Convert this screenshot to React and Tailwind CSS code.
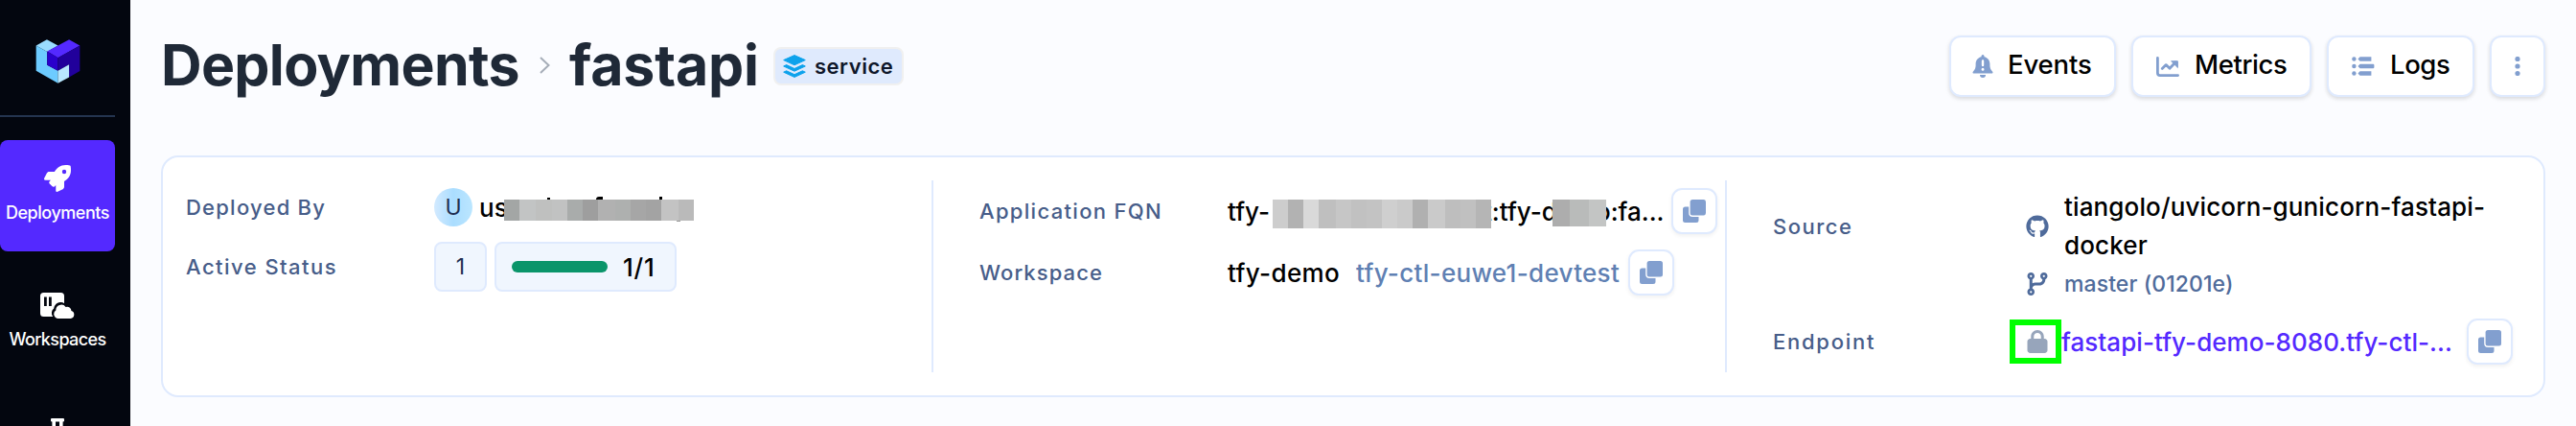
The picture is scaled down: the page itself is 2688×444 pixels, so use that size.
import React from "react";
import { FaRocket, FaGithub } from "react-icons/fa";
import { FaCodeBranch, FaLock } from "react-icons/fa6";

function Logo() {
  return (
    <svg className="h-[46px] w-[47px]" viewBox="0 0 140 139">
      <polygon points="1,20 35,1 70,20 36,39" fill="#9adcff" />
      <polygon points="1,20 36,39 36,81 70,99 70,138 1,99" fill="#6dcbff" />
      <polygon points="36,38 105,1 139,20 70,58" fill="#5429ff" />
      <polygon points="36,38 70,58 70,99 36,81" fill="#2a00cc" />
      <polygon points="70,58 139,20 139,100 105,119 105,79 70,99" fill="#21009b" />
      <polygon points="70,99 105,79 105,119 70,138" fill="#b8e7ff" />
    </svg>
  );
}

function WorkspaceIcon() {
  return (
    <svg className="h-[27px] w-9" viewBox="0 0 36 27" fill="#fff">
      <path
        fillRule="evenodd"
        d="M3.5 0H21.5A3.5 3.5 0 0 1 25 3.5V11.2A7 7 0 0 0 14.2 16.5A6 6 0 0 0 13.2 25H3.5A3.5 3.5 0 0 1 0 21.5V3.5A3.5 3.5 0 0 1 3.5 0ZM4 4.5V14H6.8V4.5ZM9 4.5V14H11.8V4.5Z"
      />
      <path d="M19 27A4.6 4.6 0 0 1 16.3 18.6A5.7 5.7 0 0 1 26.6 15A4.2 4.2 0 0 1 32.4 19A4.1 4.1 0 0 1 31.7 27Z" />
    </svg>
  );
}

function TubeIcon() {
  return (
    <svg className="h-6 w-[14px] shrink-0" viewBox="0 0 14 24" fill="#fff">
      <path fillRule="evenodd" d="M1 0H13A1 1 0 0 1 14 1V2.5A1 1 0 0 1 13 3.5H12.6V18A5.6 5.6 0 0 1 1.4 18V3.5H1A1 1 0 0 1 0 2.5V1A1 1 0 0 1 1 0ZM5 3.5V9H9V3.5Z" />
    </svg>
  );
}

function LayersIcon() {
  return (
    <svg className="size-6" viewBox="0 0 24 24" fill="#0da2ec" stroke="#0da2ec" strokeWidth="1" strokeLinejoin="round">
      <path d="M12 .6L23.3 5.6L12 10.8L.7 5.6Z" />
      <path d="M.7 12L3.6 10.6L12 14.5L20.4 10.6L23.3 12L12 17.2Z" />
      <path d="M.7 18.2L3.6 16.8L12 20.7L20.4 16.8L23.3 18.2L12 23.4Z" />
    </svg>
  );
}

function BellIcon() {
  return (
    <svg className="h-6 w-[22px]" viewBox="0 0 22 24" fill="#829fcf">
      <path
        fillRule="evenodd"
        d="M11 0A1.5 1.5 0 0 0 9.5 1.5V2.3C6 3 3.6 6 3.6 9.6V11.2C3.6 13.4 2.8 15.5 1.4 17.1L.8 17.8C.2 18.6 .6 19.6 1.7 19.6H20.3C21.4 19.6 21.8 18.6 21.2 17.8L20.6 17.1C19.2 15.5 18.4 13.4 18.4 11.2V9.6C18.4 6 16 3 12.5 2.3V1.5A1.5 1.5 0 0 0 11 0ZM11 5.2A1.2 1.2 0 0 1 12.2 6.4V11A1.2 1.2 0 0 1 9.8 11V6.4A1.2 1.2 0 0 1 11 5.2ZM11 13.7A1.5 1.5 0 1 1 11 16.7A1.5 1.5 0 0 1 11 13.7Z"
      />
      <path d="M8 21H14A3 3 0 0 1 8 21Z" />
    </svg>
  );
}

function MetricsIcon() {
  return (
    <svg className="h-[21px] w-6" viewBox="0 0 24 21" fill="none" stroke="#829fcf" strokeLinecap="round" strokeLinejoin="round">
      <path d="M1.4 1.4V17A2.6 2.6 0 0 0 4 19.6H22.6" strokeWidth="2.8" />
      <path d="M6.2 12.4L10.2 8.6L14 12.2L20 6" strokeWidth="2.8" />
      <path d="M16 4.8H22.4V11.2Z" fill="#829fcf" strokeWidth="1" />
    </svg>
  );
}

function LogsIcon() {
  return (
    <svg className="h-5 w-6" viewBox="0 0 24 20" fill="#829fcf">
      <circle cx="2.4" cy="2.5" r="2.2" />
      <circle cx="2.4" cy="10" r="2.2" />
      <circle cx="2.4" cy="17.5" r="2.2" />
      <path d="M8.6 .3H20.4V4.7H8.6L6.4 2.5ZM8.6 7.8H22.6L23.4 8.4V11.6L22.6 12.2H8.6L6.4 10ZM8.6 15.3H20.4V19.7H8.6L6.4 17.5Z" />
    </svg>
  );
}

function DotsIcon() {
  return (
    <svg className="h-5 w-1.5" viewBox="0 0 6 20" fill="#829fcf">
      <circle cx="3" cy="2.5" r="2.6" />
      <circle cx="3" cy="10" r="2.6" />
      <circle cx="3" cy="17.5" r="2.6" />
    </svg>
  );
}

function CopyButton() {
  return (
    <button className="flex size-12 shrink-0 items-center justify-center rounded-[11px] border-2 border-[#dfeafe] bg-white shadow-[0_2px_4px_rgba(0,0,0,0.06)]">
      <svg className="size-6" viewBox="0 0 24 24" fill="#829fcf">
        <path d="M2.5 7.5H6.2V14A4 4 0 0 0 10.2 18H16.5V21.5A2.5 2.5 0 0 1 14 24H2.5A2.5 2.5 0 0 1 0 21.5V10A2.5 2.5 0 0 1 2.5 7.5Z" />
        <rect x="7.6" y="0" width="16.4" height="16.4" rx="2.5" />
      </svg>
    </button>
  );
}

function ActionButton({ icon, width, children }) {
  return (
    <button className={`flex h-16 items-center rounded-xl border-2 border-[#dfeafe] bg-white shadow-[0_2px_4px_rgba(0,0,0,0.14)] ${width}`}>
      {icon}
      {children}
    </button>
  );
}

function Mosaic({ cells, height, children }) {
  return (
    <span className={`relative z-10 flex shrink-0 ${height}`}>
      {cells.map(([width, color], i) => (
        <span key={i} className="h-full" style={{ width, backgroundColor: color }} />
      ))}
      {children}
    </span>
  );
}

const userCells = [
  [16, "#a3a6a5"], [17, "#c2c4c4"], [17, "#bfc0bf"], [16, "#c1c2c2"], [16, "#a9acab"], [16, "#9e9e9e"],
  [18, "#b1b1b1"], [16, "#aeb0af"], [16, "#a6a6a6"], [16, "#a3a3a3"], [18, "#c3c3c3"], [16, "#bababa"],
];
const fqnCells = [
  [16, "#cdcdcd"], [16, "#b2b2b2"], [16, "#d9d9d9"], [18, "#bfbfbf"], [16, "#c6c6c6"], [16, "#c1c1c1"], [16, "#c3c3c3"],
  [16, "#cfcfcf"], [16, "#cacaca"], [16, "#b0b0b0"], [18, "#cacaca"], [16, "#bebebe"], [16, "#c0c0c0"], [16, "#b5b5b5"],
];
const fqnTailCells = [[18, "#adadad"], [20, "#b9bbba"], [18, "#c3c5c4"]];

const label = "shrink-0 text-[22px] font-medium text-[#475d89]";
const value = "shrink-0 whitespace-pre text-[26px] font-medium text-black";

export default function App() {
  return (
    <div className="flex h-[444px] w-[2688px] overflow-hidden bg-[#fbfcff] font-['Inter',sans-serif]">
      <aside className="h-full w-[136px] shrink-0 overflow-hidden bg-[#03060f]">
        <div className="flex h-full w-[120px] flex-col items-center">
          <div className="flex h-[122px] w-full shrink-0 justify-center border-b-2 border-[#24344f] pt-[41px]">
            <Logo />
          </div>
          <div className="mt-6 flex h-[116px] w-full shrink-0 flex-col items-center rounded-lg bg-[#5429ff] pt-[26px] text-white">
            <FaRocket className="size-7" />
            <span className="mt-2.5 text-[18px] leading-6 font-medium tracking-[-0.45px]">Deployments</span>
          </div>
          <div className="flex h-[174px] w-full shrink-0 flex-col items-center pt-[43px] text-white">
            <WorkspaceIcon />
            <span className="mt-[10px] text-[18px] leading-6 font-medium tracking-[-0.6px]">Workspaces</span>
          </div>
          <TubeIcon />
        </div>
      </aside>

      <main className="flex flex-1 flex-col pr-8 pl-8">
        <header className="flex h-[162px] items-start pt-[37px]">
          <h1 className="flex h-[62px] items-center text-[59px] font-bold text-[#1f2937]">
            <span className="w-[373px] whitespace-nowrap tracking-[-0.7px]">Deployments</span>
            <svg className="ml-[22px] h-[18px] w-[11px]" viewBox="0 0 11 18" fill="none" stroke="#a6adb8" strokeWidth="2">
              <path d="M1 1L9.5 9L1 17" />
            </svg>
            <span className="ml-5 whitespace-nowrap tracking-[-0.15px]">fastapi</span>
          </h1>
          <span className="mt-3 ml-[15px] flex h-10 w-[136px] items-center rounded-lg border-2 border-[#f0f0f0] bg-[#dfeafd] pl-2">
            <LayersIcon />
            <span className="ml-[9px] text-[22px] font-semibold tracking-[0.55px] text-[#0f172a]">service</span>
          </span>
          <div className="ml-auto flex gap-4">
            <ActionButton width="w-[174px] pl-[22px]" icon={<BellIcon />}>
              <span className="mb-0.5 ml-[15px] text-[27.5px] font-medium tracking-[-0.14px]">Events</span>
            </ActionButton>
            <ActionButton width="w-[188px] pl-6" icon={<MetricsIcon />}>
              <span className="mb-0.5 ml-4 text-[27.5px] font-medium tracking-[-0.4px]">Metrics</span>
            </ActionButton>
            <ActionButton width="w-[154px] pl-6" icon={<LogsIcon />}>
              <span className="mb-0.5 ml-4 text-[27.5px] font-medium tracking-[-0.4px]">Logs</span>
            </ActionButton>
            <ActionButton width="w-[58px] justify-center" icon={<DotsIcon />} />
          </div>
        </header>

        <section className="flex h-[252px] w-[2488px] rounded-[18px] border-2 border-[#dfeafe] bg-white py-6">
          <div className="flex w-[804px] flex-col gap-4 border-r-2 border-[#dfeafe] pt-2 pl-6">
            <div className="flex h-10 items-center">
              <span className={`${label} w-[259px] tracking-[1.24px]`}>Deployed By</span>
              <span className="flex size-10 shrink-0 items-center justify-center rounded-full bg-linear-to-r from-[#d3eaff] via-[#aaddff] to-[#bbe6ff] text-[23px] text-[#1f2f52]">U</span>
              <span className={`${value} ml-[7px] w-[26px]`}>us</span>
              <span className="mt-[6px]">
                <Mosaic height="h-[22px]" cells={userCells}>
                  <span className="absolute -top-[2px] left-[45px] h-[2px] w-[3px] bg-black" />
                  <span className="absolute -top-[3px] left-[96px] h-[3px] w-[7px] rounded-tl-sm bg-black" />
                  <span className="absolute -top-[3px] left-[162px] h-[3px] w-[3px] bg-black" />
                  <span className="absolute -bottom-px left-[180px] h-px w-1 bg-[#9a9a9a]" />
                </Mosaic>
              </span>
            </div>
            <div className="flex h-[52px] items-center">
              <span className={`${label} w-[259px] tracking-[1.46px]`}>Active Status</span>
              <span className="flex h-full w-[55px] items-center justify-center rounded-lg border-2 border-[#dfeafe] bg-[#f0f6fe] text-[23px] text-[#1f2f52]">1</span>
              <span className="ml-2 flex h-full w-[190px] items-center rounded-lg border-2 border-[#dfeafe] bg-[#f0f6fe] pl-4">
                <span className="h-3 w-[100px] rounded-full bg-[#0a956a]" />
                <span className="ml-4 text-[26px] font-medium tracking-[0.8px] text-black">1/1</span>
              </span>
            </div>
          </div>

          <div className="flex w-[828px] flex-col gap-4 border-r-2 border-[#dfeafe] pt-2 pl-12">
            <div className="flex h-12 items-center">
              <span className={`${label} w-[259px] tracking-[1.32px]`}>Application FQN</span>
              <span className={`${value} w-[47px]`}>tfy-</span>
              <span className="mt-[6px]">
                <Mosaic height="h-[30px]" cells={fqnCells} />
              </span>
              <span className={`${value} -ml-2 w-[72px]`}>t:tfy-d</span>
              <span className="mt-1">
                <Mosaic height="h-7" cells={fqnTailCells} />
              </span>
              <span className={`${value} -ml-[11px] w-[79px]`}>o:fa...</span>
              <CopyButton />
            </div>
            <div className="flex h-12 items-center">
              <span className={`${label} w-[259px] tracking-[1.09px]`}>Workspace</span>
              <span className={`${value} w-[134px] tracking-[0.37px]`}>tfy-demo</span>
              <span className="w-[284px] text-[26px] font-medium tracking-[0.31px] whitespace-nowrap text-[#5f80b3]">tfy-ctl-euwe1-devtest</span>
              <CopyButton />
            </div>
          </div>

          <div className="flex flex-1 flex-col pt-2 pl-12">
            <div className="flex">
              <span className={`${label} flex h-20 w-[264px] items-center tracking-[1.5px]`}>Source</span>
              <div className="flex flex-col">
                <div className="flex h-20 items-center">
                  <FaGithub className="size-6 text-[#4f6b9b]" />
                  <span className="ml-4 w-[460px] text-[26px] leading-10 font-medium tracking-[0.13px] text-black">
                    tiangolo/uvicorn-gunicorn-fastapi-docker
                  </span>
                </div>
                <div className="flex h-10 items-center">
                  <FaCodeBranch className="size-6 text-[#4f6b9b]" />
                  <span className="ml-4 text-[23px] font-medium tracking-[0.09px] text-[#4f6b9b]">master (01201e)</span>
                </div>
              </div>
            </div>
            <div className="mt-4 flex h-12 items-center">
              <span className={`${label} w-[247px] tracking-[1.75px]`}>Endpoint</span>
              <span className="flex h-[46px] w-[54px] items-center justify-center border-6 border-[#00ff00] pl-[3px]">
                <FaLock className="size-6 text-[#97a5bb]" />
              </span>
              <span className="w-[423px] text-[26px] font-medium tracking-[0.05px] whitespace-nowrap text-[#5429ff]">fastapi-tfy-demo-8080.tfy-ctl-...</span>
              <CopyButton />
            </div>
          </div>
        </section>
      </main>
    </div>
  );
}
